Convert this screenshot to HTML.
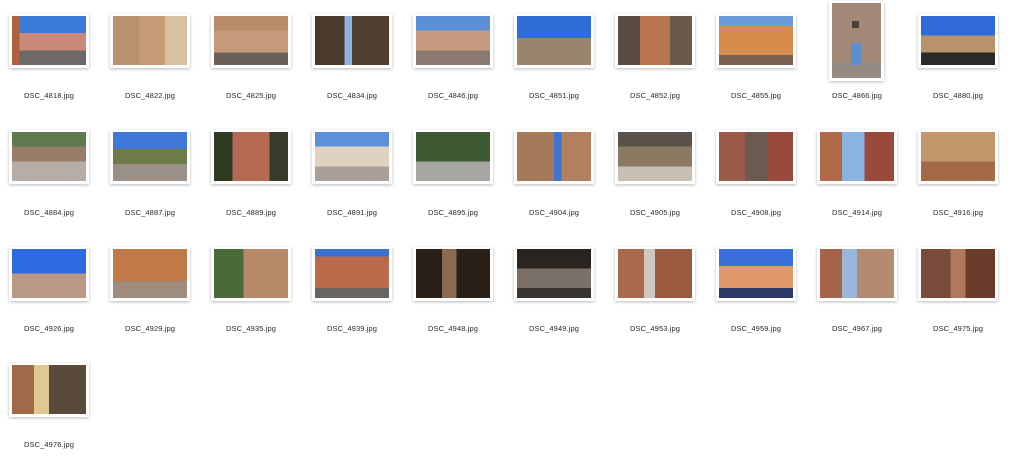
<!DOCTYPE html>
<html><head><meta charset="utf-8"><style>
html,body{margin:0;padding:0;background:#fff;width:1024px;height:469px;overflow:hidden;font-family:"Liberation Sans",sans-serif}
.f{position:absolute;background:#fff;box-shadow:0 1px 3px rgba(0,0,0,.28);}
.i{position:absolute;left:3px;top:2px;right:3px;bottom:3px}
.l{position:absolute;width:100px;text-align:center;font-size:7.5px;color:#2a2a2a;letter-spacing:.1px}
</style></head><body>
<div id="g"></div>
<script>
const names=["4818","4822","4825","4834","4846","4851","4852","4855","4866","4880","4884","4887","4889","4891","4895","4904","4905","4908","4914","4916","4926","4929","4935","4939","4948","4949","4953","4959","4967","4975","4976"];
const bg=[
"linear-gradient(90deg,#b0603f 0 10%,transparent 10%),linear-gradient(#3a7bd8 0 35%,#c98a7a 35% 70%,#6d6a66 70%)",
"linear-gradient(90deg,#b8926e 0 35%,#c59c76 35% 70%,#d7c2a0 70%),#a88",
"linear-gradient(#b98b68 0 30%,#c59a7a 30% 75%,#6b6058 75%)",
"linear-gradient(90deg,#4a3a2c 0 40%,#8fb4e0 40% 50%,#503e30 50%)",
"linear-gradient(#5b8fd8 0 30%,#c69a7e 30% 70%,#8a7a70 70%)",
"linear-gradient(#2e6ed6 0 45%,#9a8470 45%)",
"linear-gradient(90deg,#5a4c40 0 30%,#b9764e 30% 70%,#6a5a4c 70%)",
"linear-gradient(#6b9ad8 0 20%,#d58c4c 20% 80%,#7a6050 80%)",
"linear-gradient(#a38a78 0 80%,#948b84 80%)",
"linear-gradient(#2f6ad8 0 40%,#b8926a 40% 75%,#2c2a28 75%)",
"linear-gradient(#5f7a4e 0 30%,#9a7c6a 30% 60%,#b6aea6 60%)",
"linear-gradient(#3f78d6 0 35%,#6d7a4a 35% 65%,#9a9088 65%)",
"linear-gradient(90deg,#2e3a22 0 25%,#b46a52 25% 75%,#3a3a2a 75%)",
"linear-gradient(#5c90d8 0 30%,#e0d2c0 30% 70%,#aaa09a 70%)",
"linear-gradient(#3d5a32 0 60%,#a8a6a0 60%)",
"linear-gradient(90deg,#a47a5a 0 50%,#3f74cf 50% 60%,#b08060 60%)",
"linear-gradient(#5a5248 0 30%,#8a7a64 30% 70%,#c8c0b4 70%)",
"linear-gradient(90deg,#9a5a4a 0 35%,#6a5a50 35% 65%,#9a4a3a 65%)",
"linear-gradient(90deg,#b06a48 0 30%,#8ab4e0 30% 60%,#9a4a3a 60%)",
"linear-gradient(#c3966c 0 60%,#a46a48 60%)",
"linear-gradient(#2f6be0 0 50%,#b89a84 50%)",
"linear-gradient(#c07a48 0 65%,#a08c7c 65%)",
"linear-gradient(90deg,#4a6a3a 0 40%,#b88a6a 40%)",
"linear-gradient(#3d6fd0 0 15%,#b86a4a 15% 80%,#6a6460 80%)",
"linear-gradient(90deg,#2a2018 0 35%,#8a6a50 35% 55%,#2a2018 55%)",
"linear-gradient(#2a2420 0 40%,#7a7068 40% 80%,#3a3430 80%)",
"linear-gradient(90deg,#a86a4a 0 35%,#d0c8c0 35% 50%,#9a5a40 50%)",
"linear-gradient(#3a6ed8 0 35%,#e09a6a 35% 80%,#2c3a6a 80%)",
"linear-gradient(90deg,#a6634a 0 30%,#9ab6d8 30% 50%,#b48a70 50%)",
"linear-gradient(90deg,#7a4a3a 0 40%,#b07a5a 40% 60%,#6a3a2a 60%)",
"linear-gradient(90deg,#a06a4a 0 30%,#e0c890 30% 50%,#5a4a3a 50%)"];
let h="";
names.forEach((n,k)=>{
 const c=k%10,r=Math.floor(k/10);
 const cx=49+101*c;
 const top=[14,130,247,363][r];
 const ly=[91,208,324,440][r];
 if(n==="4866"){
  h+=`<div class="f" style="left:829px;top:1px;width:55px;height:80px"><div class="i" style="background:${bg[k]}"><div style="position:absolute;left:19px;top:40px;width:10px;height:22px;background:#5b8fd0"></div><div style="position:absolute;left:20px;top:18px;width:7px;height:7px;background:#4a4038"></div></div></div>`;
 } else {
  h+=`<div class="f" style="left:${cx-40}px;top:${top}px;width:80px;height:54px"><div class="i" style="background:${bg[k]}"></div></div>`;
 }
 h+=`<div class="l" style="left:${cx-50}px;top:${ly}px">DSC_${n}.jpg</div>`;
});
document.getElementById("g").innerHTML=h;
</script>
</body></html>
